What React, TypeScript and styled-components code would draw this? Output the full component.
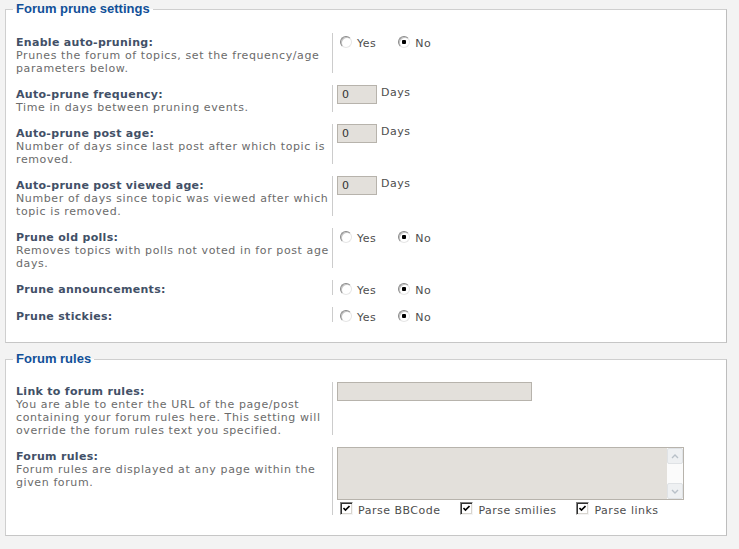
import styled, { createGlobalStyle } from 'styled-components';

const GlobalStyle = createGlobalStyle`
  html, body {
    margin: 0;
    padding: 0;
    background: #f3f3f3;
  }
  body {
    font-family: "DejaVu Sans", Verdana, sans-serif;
    font-size: 11px;
  }
`;

const Page = styled.div`
  display: flex;
  flex-direction: column;
  gap: 9px;
  padding: 2px 12px 12px 5px;
`;

const Fieldset = styled.fieldset<{ $top: number }>`
  margin: 0;
  min-width: 0;
  padding: ${p => p.$top}px 10px 18px 10px;
  background: #fff;
  border: 1px solid #cfcfcf;
  border-right-color: #bdbdbd;
  border-bottom-color: #c6c6c6;
`;

const Legend = styled.legend`
  margin-left: -3px;
  padding: 0 3px;
  font-family: "Liberation Sans", Arial, sans-serif;
  font-size: 13px;
  font-weight: bold;
  line-height: 14px;
  color: #115098;
`;

const Rows = styled.div`
  display: flex;
  flex-direction: column;
  gap: 10px;
`;

const Row = styled.dl`
  display: grid;
  grid-template-columns: 316px 1fr;
  margin: 0;
`;

const Term = styled.dt`
  padding-top: 3px;
  line-height: 13px;
`;

const Title = styled.label`
  display: block;
  font-weight: bold;
  letter-spacing: 0.3px;
  color: #425067;
`;

const Explain = styled.span`
  display: block;
  white-space: nowrap;
  letter-spacing: 0.6px;
  color: #6b6b6b;
`;

/* the grey rule stops a little above the end of the explain text */
const Detail = styled.dd`
  position: relative;
  margin: 0;
  padding: 0 0 0 5px;

  &::before {
    content: '';
    position: absolute;
    left: 0;
    top: 0;
    bottom: 2px;
    width: 1px;
    background: #cccccc;
  }
`;

const Options = styled.div`
  display: flex;
  gap: 22px;
  padding: 1px 0 0 3px;
`;

const Option = styled.label`
  display: inline-flex;
  align-items: flex-start;
  gap: 5px;
  line-height: 13px;
  letter-spacing: 0.5px;
  color: #4d4d4d;
`;

const RadioMark = styled.span<{ $on?: boolean }>`
  flex: none;
  box-sizing: border-box;
  width: 12px;
  height: 12px;
  margin-top: 2px;
  border-radius: 50%;
  border: 1px solid;
  border-color: #8a8a8a #e6e6e6 #e6e6e6 #8a8a8a;
  box-shadow: inset 1px 1px 0 #c4c4c4;
  background: ${p =>
    p.$on ? 'radial-gradient(circle, #000 0 2px, #fff 2.5px)' : '#fff'};
`;

const OptText = styled.span`
  margin-top: 3px;
`;

const Field = styled.div`
  display: flex;
  align-items: flex-start;
`;

const TextBox = styled.input<{ $w: number }>`
  box-sizing: border-box;
  width: ${p => p.$w}px;
  height: 19px;
  margin: 0;
  padding: 0 4px;
  border: 1px solid #b7b3ac;
  background: #e3e0db;
  font-family: "DejaVu Sans", Verdana, sans-serif;
  font-size: 11px;
  color: #333;
  outline: none;
`;

const Unit = styled.span`
  margin: 1px 0 0 4px;
  line-height: 13px;
  letter-spacing: 0.5px;
  color: #4d4d4d;
`;

const AreaBox = styled.div`
  box-sizing: border-box;
  display: flex;
  width: 347px;
  height: 53px;
  border: 1px solid #b7b3ac;
  background: #e3e0db;
`;

const Area = styled.textarea`
  flex: 1;
  margin: 0;
  padding: 2px;
  border: none;
  background: transparent;
  resize: none;
  outline: none;
  font-family: "DejaVu Sans", Verdana, sans-serif;
  font-size: 11px;
`;

const ScrollTrack = styled.div`
  display: flex;
  flex-direction: column;
  justify-content: space-between;
  width: 16px;
  background: #fbfbfb;
`;

const ScrollButton = styled.div`
  box-sizing: border-box;
  display: flex;
  align-items: center;
  justify-content: center;
  width: 16px;
  height: 16px;
  border: 1px solid #dfe2e5;
  border-radius: 2px;
  background: #eef0f2;
`;

const Checks = styled.div`
  display: flex;
  gap: 20px;
  margin-top: 2px;
  padding-left: 3px;
`;

const Check = styled.label`
  display: inline-flex;
  align-items: flex-start;
  gap: 5px;
  line-height: 13px;
  letter-spacing: 0.5px;
  color: #4d4d4d;
`;

const CheckMark = styled.span`
  flex: none;
  box-sizing: border-box;
  display: flex;
  align-items: center;
  justify-content: center;
  width: 13px;
  height: 13px;
  border: 1px solid;
  border-color: #808080 #f4f4f4 #f4f4f4 #808080;
  box-shadow: inset 1px 1px 0 #303030, inset -1px -1px 0 #d8d5cf;
  background: #fff;
`;

const CheckText = styled.span`
  margin-top: 2px;
`;

function Radios({ yes }: { yes: boolean }) {
  return (
    <Options>
      <Option>
        <RadioMark $on={yes} />
        <OptText>Yes</OptText>
      </Option>
      <Option>
        <RadioMark $on={!yes} />
        <OptText>No</OptText>
      </Option>
    </Options>
  );
}

function Days() {
  return (
    <Field>
      <TextBox $w={40} defaultValue="0" />
      <Unit>Days</Unit>
    </Field>
  );
}

function Tick() {
  return (
    <CheckMark>
      <svg width="7" height="7" viewBox="0 0 7 7">
        <path d="M0.5 3 L2.5 5 L6.5 1" stroke="#000" strokeWidth="1.6" fill="none" />
      </svg>
    </CheckMark>
  );
}

function Arrow({ up }: { up?: boolean }) {
  return (
    <ScrollButton>
      <svg width="8" height="5" viewBox="0 0 8 5">
        <path
          d={up ? 'M1 4 L4 1 L7 4' : 'M1 1 L4 4 L7 1'}
          stroke="#b8c0c8"
          strokeWidth="1.4"
          fill="none"
        />
      </svg>
    </ScrollButton>
  );
}

export default function App() {
  return (
    <>
      <GlobalStyle />
      <Page>
        <Fieldset $top={17}>
          <Legend>Forum prune settings</Legend>
          <Rows>
            <Row>
              <Term>
                <Title>Enable auto-pruning:</Title>
                <Explain>
                  Prunes the forum of topics, set the frequency/age
                  <br />
                  parameters below.
                </Explain>
              </Term>
              <Detail>
                <Radios yes={false} />
              </Detail>
            </Row>
            <Row>
              <Term>
                <Title>Auto-prune frequency:</Title>
                <Explain>Time in days between pruning events.</Explain>
              </Term>
              <Detail>
                <Days />
              </Detail>
            </Row>
            <Row>
              <Term>
                <Title>Auto-prune post age:</Title>
                <Explain>
                  Number of days since last post after which topic is
                  <br />
                  removed.
                </Explain>
              </Term>
              <Detail>
                <Days />
              </Detail>
            </Row>
            <Row>
              <Term>
                <Title>Auto-prune post viewed age:</Title>
                <Explain>
                  Number of days since topic was viewed after which
                  <br />
                  topic is removed.
                </Explain>
              </Term>
              <Detail>
                <Days />
              </Detail>
            </Row>
            <Row>
              <Term>
                <Title>Prune old polls:</Title>
                <Explain>
                  Removes topics with polls not voted in for post age
                  <br />
                  days.
                </Explain>
              </Term>
              <Detail>
                <Radios yes={false} />
              </Detail>
            </Row>
            <Row>
              <Term>
                <Title>Prune announcements:</Title>
              </Term>
              <Detail>
                <Radios yes={false} />
              </Detail>
            </Row>
            <Row>
              <Term>
                <Title>Prune stickies:</Title>
              </Term>
              <Detail>
                <Radios yes={false} />
              </Detail>
            </Row>
          </Rows>
        </Fieldset>

        <Fieldset $top={16}>
          <Legend>Forum rules</Legend>
          <Rows>
            <Row>
              <Term>
                <Title>Link to forum rules:</Title>
                <Explain>
                  You are able to enter the URL of the page/post
                  <br />
                  containing your forum rules here. This setting will
                  <br />
                  override the forum rules text you specified.
                </Explain>
              </Term>
              <Detail>
                <Field>
                  <TextBox $w={195} />
                </Field>
              </Detail>
            </Row>
            <Row>
              <Term>
                <Title>Forum rules:</Title>
                <Explain>
                  Forum rules are displayed at any page within the
                  <br />
                  given forum.
                </Explain>
              </Term>
              <Detail>
                <AreaBox>
                  <Area />
                  <ScrollTrack>
                    <Arrow up />
                    <Arrow />
                  </ScrollTrack>
                </AreaBox>
                <Checks>
                  <Check>
                    <Tick />
                    <CheckText>Parse BBCode</CheckText>
                  </Check>
                  <Check>
                    <Tick />
                    <CheckText>Parse smilies</CheckText>
                  </Check>
                  <Check>
                    <Tick />
                    <CheckText>Parse links</CheckText>
                  </Check>
                </Checks>
              </Detail>
            </Row>
          </Rows>
        </Fieldset>
      </Page>
    </>
  );
}
